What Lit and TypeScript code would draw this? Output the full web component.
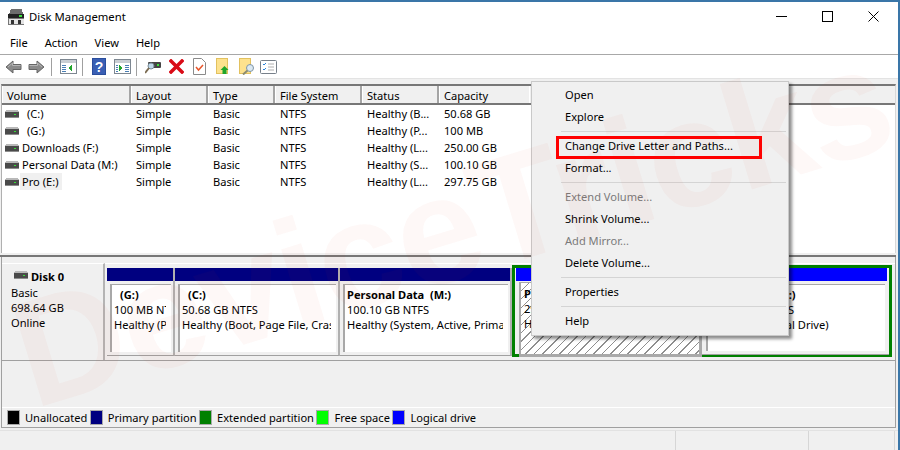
import { LitElement, html, css, svg } from "lit";
import { customElement } from "lit/decorators.js";

const cols = ["Volume", "Layout", "Type", "File System", "Status", "Capacity"];
const rows = [
  ["(C:)", "Simple", "Basic", "NTFS", "Healthy (B...", "50.68 GB", "ind"],
  ["(G:)", "Simple", "Basic", "NTFS", "Healthy (P...", "100 MB", "ind"],
  ["Downloads (F:)", "Simple", "Basic", "NTFS", "Healthy (L...", "250.00 GB", ""],
  ["Personal Data (M:)", "Simple", "Basic", "NTFS", "Healthy (S...", "100.10 GB", ""],
  ["Pro (E:)", "Simple", "Basic", "NTFS", "Healthy (L...", "297.75 GB", "sel"],
];
const primary = [
  { w: 68, name: "(G:)", ind: true, a: "100 MB NTFS", b: "Healthy (Primary Partition)" },
  { w: 165, name: "(C:)", ind: true, a: "50.68 GB NTFS", b: "Healthy (Boot, Page File, Crash Dump)" },
  { w: 172, name: "Personal Data  (M:)", ind: false, a: "100.10 GB NTFS", b: "Healthy (System, Active, Primary Partition)" },
];
const legend = [
  ["#000000", "Unallocated"],
  ["#000080", "Primary partition"],
  ["#008000", "Extended partition"],
  ["#00ff00", "Free space"],
  ["#0000ff", "Logical drive"],
];
const menu = [
  ["Open"], ["Explore"], null,
  ["Change Drive Letter and Paths..."], ["Format..."], null,
  ["Extend Volume...", 1], ["Shrink Volume..."], ["Add Mirror...", 1], ["Delete Volume..."], null,
  ["Properties"], null, ["Help"],
] as const;

const driveSmall = html`<svg class="drv" width="14" height="8" viewBox="0 0 14 8" shape-rendering="crispEdges">
  <path d="M1 0h12l1 2H0z" fill="#b9b9b9"/><rect x="0" y="2" width="14" height="5" fill="#4a4a4a"/>
  <rect x="0" y="7" width="14" height="1" fill="#8c8c8c"/><rect x="9" y="4" width="2" height="1" fill="#35e035"/>
</svg>`;

const panel = (right: boolean) => svg`<svg width="17" height="15" viewBox="0 0 17 15" shape-rendering="crispEdges">
  <rect x=".5" y=".5" width="16" height="14" fill="#fff" stroke="#7d8791"/>
  <rect x="1" y="1" width="15" height="3" fill="#c9ced3"/>
  ${right
    ? svg`<path d="M5 6l4 3-4 3z" fill="#21a52c"/><path d="M11 6h4v1h-4zM11 8h4v1h-4zM11 10h4v1h-4zM11 12h4v1h-4z" fill="#4a7fb5"/><path d="M2 6h2v1H2zM2 8h2v1H2zM2 10h2v1H2zM2 12h2v1H2z" fill="#4a7fb5"/>`
    : svg`<path d="M12 6L8 9l4 3z" fill="#21a52c"/><path d="M2 6h4v1H2zM2 8h4v1H2zM2 10h4v1H2zM2 12h4v1H2z" fill="#4a7fb5"/>`}
</svg>`;

const arrow = (flip: boolean) => svg`<svg width="17" height="14" viewBox="0 0 17 14" class=${flip ? "flip" : ""}>
  <path d="M1 7L8 1v3.5h8v5H8V13z" fill="#8b8b8b" stroke="#666" stroke-width="1"/>
  <path d="M3 7l4.500-4v2.500h8" fill="none" stroke="#b5b5b5" stroke-width="1"/>
</svg>`;

const folder = (inner: unknown) => svg`<svg width="16" height="17" viewBox="0 0 16 17">
  <rect x=".5" y=".5" width="11" height="15" fill="#fde28e" stroke="#e2c15f"/>${inner}
</svg>`;

@customElement("app-root")
export class AppRoot extends LitElement {
  static styles = css`
    :host { display: block; width: 900px; height: 450px; position: relative; overflow: hidden; background: #f0f0f0;
      font-family: "Noto Sans", "Open Sans", sans-serif; font-size: 11.1px; color: #000; line-height: 15px; }
    .win { display: flex; flex-direction: column; height: 450px; box-sizing: border-box; border-top: 2px solid #3a76a8; border-right: 2px solid #3a76a8; }
    .title { height: 31px; box-sizing: border-box; background: #fff; display: flex; align-items: center; padding: 0 4px 2px 8px; gap: 5px; font-size: 11.3px; flex: none; }
    .title .grow { flex: 1; }
    .ctl { width: 41px; height: 29px; margin-left: 0; display: flex; align-items: center; justify-content: center; }
    .menubar { height: 21px; box-sizing: border-box; padding-bottom: 2px; background: #fff; display: flex; align-items: center; padding-left: 3px; flex: none; }
    .menubar span { padding: 0 7px; margin-right: 3px; }
    .rule { height: 1px; background: #a8a8a8; flex: none; }
    .toolbar { height: 23px; background: #fff; display: flex; align-items: center; padding-left: 5px; border-bottom: 1px solid #e3e3e3; flex: none; }
    .toolbar svg { flex: none; display: block; }
    .flip { transform: scaleX(-1); }
    .tsep { width: 1px; height: 18px; background: #a0a0a0; flex: none; }
    .s5 { width: 5px; flex: none; } .s6 { width: 6px; flex: none; } .s7 { width: 7px; flex: none; }
    .s8 { width: 8px; flex: none; } .s9 { width: 9px; flex: none; } .s10 { width: 10px; flex: none; }
    .strip { height: 5px; flex: none; }
    .list { height: 169px; flex: none; margin-left: 1px; margin-right: 2px; background: #fff; border-left: 1px solid #b0b0b0; border-right: 1px solid #d8d8d8; border-top: 2px solid #777; box-sizing: border-box; }
    .head, .row { display: grid; grid-template-columns: 129px 77px 67px 87px 77px 90px 1fr; }
    .head { height: 17px; grid-template-rows: 17px; background: #f0f0f0; border-bottom: 2px solid #777; box-sizing: content-box; }
    .head span { border-right: 2px solid #a5a5a5; border-left: 1px solid #fff; padding-left: 4px; height: 17px; line-height: 20px; white-space: nowrap; }
    .head span:nth-child(n+6) { border-right: 0; }
    .row { height: 17px; align-items: center; }
    .row > span { padding-left: 5px; white-space: nowrap; }
    .vol { display: flex; align-items: center; gap: 3px; padding-left: 3px !important; }
    .drv { flex: none; display: block; }
    .vol .ind { margin-left: 5px; }
    .vol .sel { background: #f0f0f0; height: 17px; line-height: 17px; padding: 0 4px 0 2px; margin-left: -2px; }
    .split { height: 2px; flex: none; border-bottom: 2px solid #777; margin-right: 2px; background: #f0f0f0; box-sizing: content-box; }
    .lower { height: 171px; flex: none; margin-right: 2px; margin-left: 1px; border-left: 1px solid #a0a0a0; border-right: 1px solid #a0a0a0; border-bottom: 1px solid #a0a0a0; display: flex; flex-direction: column; box-sizing: border-box; }
    .diskrow { height: 104px; flex: none; display: flex; border-bottom: 1px solid #a0a0a0; box-sizing: border-box; padding-top: 6px; }
    .disk { width: 103px; flex: none; box-sizing: border-box; border-top: 1px solid #fff; border-right: 2px solid #b4b4b4; padding: 0 0 0 9px; }
    .dname { display: flex; align-items: center; gap: 3px; font-weight: 700; height: 17px; margin-top: 4px; margin-left: 3px; }
    .dname .drv { margin-top: -4px; }
    .parts { flex: 1; display: flex; align-items: flex-start; padding-left: 2px; border-top: 1px solid #fff; min-width: 0; }
    .part { flex: none; box-sizing: border-box; height: 88px; margin-top: 4px; display: flex; flex-direction: column; border-bottom: 1px solid #a0a0a0; border-right: 2px solid #b0b0b0; }
    .bar { height: 13px; flex: none; background: #000080; margin-bottom: 2px; }
    .bar.log { background: #0000ff; }
    .body { flex: 1; min-height: 0; padding: 1px 2px 3px 3px; display: flex; }
    .inner { flex: 1; min-width: 0; background: #fff; border-top: 1px solid #a8a8a8; border-left: 2px solid #a8a8a8; padding: 2px 5px 0 2px; overflow: hidden; white-space: pre; }
    .inner b.ind { margin-left: 6px; }
    .inner div { overflow: hidden; height: 15px; }
    .ext { flex: none; box-sizing: border-box; width: 380px; height: 92px; margin: 1px 0 0 0; border: 3px solid #008000; display: flex; background: #f0f0f0; }
    .ext .part { margin-top: 0; height: 89px; border-right: 0; border-bottom: 0; }
    .pro { width: 187px; padding-left: 1px; }
    .pro .bar { margin-bottom: 0; }
    .logical { width: 187px; padding-right: 2px; border-bottom: 1px solid #a0a0a0 !important; height: 87px !important; }
    .logical .body { padding-left: 4px; }
    .logical .inner { padding-left: 4px; }
    .hatch { flex: 1; margin: 1px 0 0 3px; border: solid #a9a9a9; border-width: 1px 3px 3px 2px; padding: 3px 0 0 3px; white-space: pre; overflow: hidden;
      background: repeating-linear-gradient(135deg, #fff 0 5px, #8f8f8f 5px 6px); }
    .hatch div { height: 15px; }
    .middle { flex: 1; }
    .legend { height: 20px; flex: none; border-top: 1px solid #fff; display: flex; align-items: center; padding-left: 5px; box-sizing: border-box; }
    .lg { display: flex; align-items: center; gap: 5px; margin-right: 2.500px; white-space: nowrap; }
    .sw { width: 11px; height: 13px; border: 0.5px solid #aaa; box-sizing: content-box; }
    .gap { height: 2px; flex: none; }
    .status { flex: 1; display: grid; grid-template-columns: 676px 133px 86px; border-top: 1px solid #e2e2e2; }
    .status span { border-right: 1px solid #d6d6d6; }
    .mark { position: absolute; left: 40px; top: 280px; font: 700 152px/150px "Liberation Sans", sans-serif; color: rgba(240, 60, 20, .035); white-space: nowrap; transform: rotate(-17deg); transform-origin: 0 100%; pointer-events: none; letter-spacing: -2px; z-index: 5; }
    .ctx { position: absolute; left: 531px; top: 81px; width: 258px; height: 255px; box-sizing: border-box; background: #f0f0f0; border: 1px solid #c9c9c9; box-shadow: 3px 3px 3px rgba(0, 0, 0, .45); padding: 2px; z-index: 3; }
    .it { height: 22px; line-height: 22px; padding-left: 31px; white-space: nowrap; }
    .it.dis { color: #7a7a7a; }
    .sep { height: 1px; margin: 3px 0 3px 27px; background: #d4d4d4; }
    .red { position: absolute; left: 556px; top: 136px; width: 206px; height: 23px; box-sizing: border-box; border: 3px solid #f00; z-index: 4; }
  `;

  render() {
    return html`
      <div class="win">
        <div class="title">
          <svg width="16" height="16" viewBox="0 0 16 16" shape-rendering="crispEdges">
            <path d="M3 0h11l1 5H1z" fill="#6d6d6d"/><rect x="0" y="5" width="16" height="4" fill="#222"/>
            <rect x="11" y="6" width="3" height="2" fill="#3ee03e"/><rect x="0" y="9" width="16" height="6" fill="#e5e5e5" stroke="#777" stroke-width="1"/>
            <rect x="3" y="11" width="3" height="4" fill="#333"/><rect x="10" y="11" width="3" height="4" fill="#333"/>
          </svg>
          <span>Disk Management</span><span class="grow"></span>
          <span class="ctl"><svg width="11" height="11" viewBox="0 0 11 11"><path d="M0 5.500h11" stroke="#000"/></svg></span>
          <span class="ctl"><svg width="11" height="11" viewBox="0 0 11 11"><rect x=".5" y=".5" width="10" height="10" fill="none" stroke="#000"/></svg></span>
          <span class="ctl"><svg width="11" height="11" viewBox="0 0 11 11"><path d="M.5.500l10 10M10.500.500l-10 10" stroke="#000"/></svg></span>
        </div>
        <div class="menubar"><span>File</span><span>Action</span><span>View</span><span>Help</span></div>
        <div class="rule"></div>
        <div class="toolbar">
          ${arrow(false)}<span class="s6"></span>${arrow(true)}<span class="s6"></span>
          <span class="tsep"></span><span class="s8"></span>${panel(false)}<span class="s5"></span>
          <span class="tsep"></span><span class="s9"></span>
          <svg width="14" height="17" viewBox="0 0 14 17"><rect width="14" height="17" fill="#2a4d9c"/><rect x="1" y="1" width="12" height="15" fill="#3a5fb4"/><text x="7" y="13.500" text-anchor="middle" fill="#fff" font-family="Liberation Sans" font-weight="700" font-size="14">?</text></svg>
          <span class="s8"></span>${panel(true)}<span class="s5"></span>
          <span class="tsep"></span><span class="s8"></span>
          <svg width="16" height="16" viewBox="0 0 16 16"><rect x="3" y="3" width="13" height="6" rx="1" fill="#444"/><rect x="12" y="5" width="2" height="2" fill="#3ee03e"/><circle cx="6" cy="7" r="3" fill="#bcd6e8" stroke="#7a8a96"/><path d="M4 9L0 14" stroke="#7a6a50" stroke-width="2"/></svg>
          <span class="s8"></span>
          <svg width="15" height="15" viewBox="0 0 15 15"><path d="M2 2l11 11M13 2L2 13" stroke="#d90b16" stroke-width="3.500" stroke-linecap="square"/></svg>
          <span class="s9"></span>
          <svg width="13" height="17" viewBox="0 0 13 17"><path d="M.5.500h8l4 4v12H.5z" fill="#fff" stroke="#8a8a8a"/><path d="M3 9l2.500 3L10 7" fill="none" stroke="#e8562a" stroke-width="1.500"/></svg>
          <span class="s10"></span>
          ${folder(svg`<path d="M8.500 8l4 4h-2v4h-4v-4h-2z" fill="#1fa52a"/>`)}
          <span class="s7"></span>
          ${folder(svg`<circle cx="11" cy="10" r="3.500" fill="#dbe9f3" stroke="#7f95a6"/><path d="M8.500 12.500L4 16.500" stroke="#8c8c70" stroke-width="2"/>`)}
          <span class="s5"></span>
          <svg width="17" height="14" viewBox="0 0 17 14"><rect x=".5" y=".5" width="16" height="13" rx="1" fill="#fff" stroke="#77808a" stroke-width="1"/><path d="M3 4l1 1 2-2M3 9l1 1 2-2" fill="none" stroke="#2a83d8"/><path d="M8 4h6M8 7h6M8 10h6" stroke="#b0b0b0"/></svg>
        </div>
        <div class="strip"></div>
        <div class="list">
          <div class="head">${cols.map((c) => html`<span>${c}</span>`)}<span></span></div>
          <div>
            ${rows.map((r) => html`<div class="row">
              <span class="vol">${driveSmall}<span class=${r[6]}>${r[0]}</span></span>
              ${r.slice(1, 6).map((c) => html`<span>${c}</span>`)}
            </div>`)}
          </div>
        </div>
        <div class="split"></div>
        <div class="lower">
          <div class="diskrow">
            <div class="disk">
              <div class="dname">${driveSmall}<span>Disk 0</span></div>
              <div>Basic</div><div>698.64 GB</div><div>Online</div>
            </div>
            <div class="parts">
              ${primary.map((p) => html`<div class="part" style="width:${p.w}px">
                <div class="bar"></div>
                <div class="body"><div class="inner"><div><b class=${p.ind ? "ind" : ""}>${p.name}</b></div><div>${p.a}</div><div>${p.b}</div></div></div>
              </div>`)}
              <div class="ext">
                <div class="part pro">
                  <div class="bar log"></div>
                  <div class="hatch"><div><b>Pro  (E:)</b></div><div>297.75 GB NTFS</div><div>Healthy (Logical Drive)</div></div>
                </div>
                <div class="part logical">
                  <div class="bar log"></div>
                  <div class="body"><div class="inner"><div><b>Downloads  (F:)</b></div><div>250.00 GB NTFS</div><div>Healthy (Logical Drive)</div></div></div>
                </div>
              </div>
            </div>
          </div>
          <div class="middle"></div>
          <div class="legend">
            ${legend.map(([c, t]) => html`<span class="lg"><span class="sw" style="background:${c}"></span>${t}</span>`)}
          </div>
        </div>
        <div class="gap"></div>
        <div class="status"><span></span><span></span><span></span></div>
      </div>
      <div class="ctx">
        ${menu.map((m) => m === null
          ? html`<div class="sep"></div>`
          : html`<div class="it ${m[1] ? "dis" : ""}">${m[0]}</div>`)}
      </div>
      <div class="red"></div>
      <div class="mark">DeviceTricks</div>
    `;
  }
}
